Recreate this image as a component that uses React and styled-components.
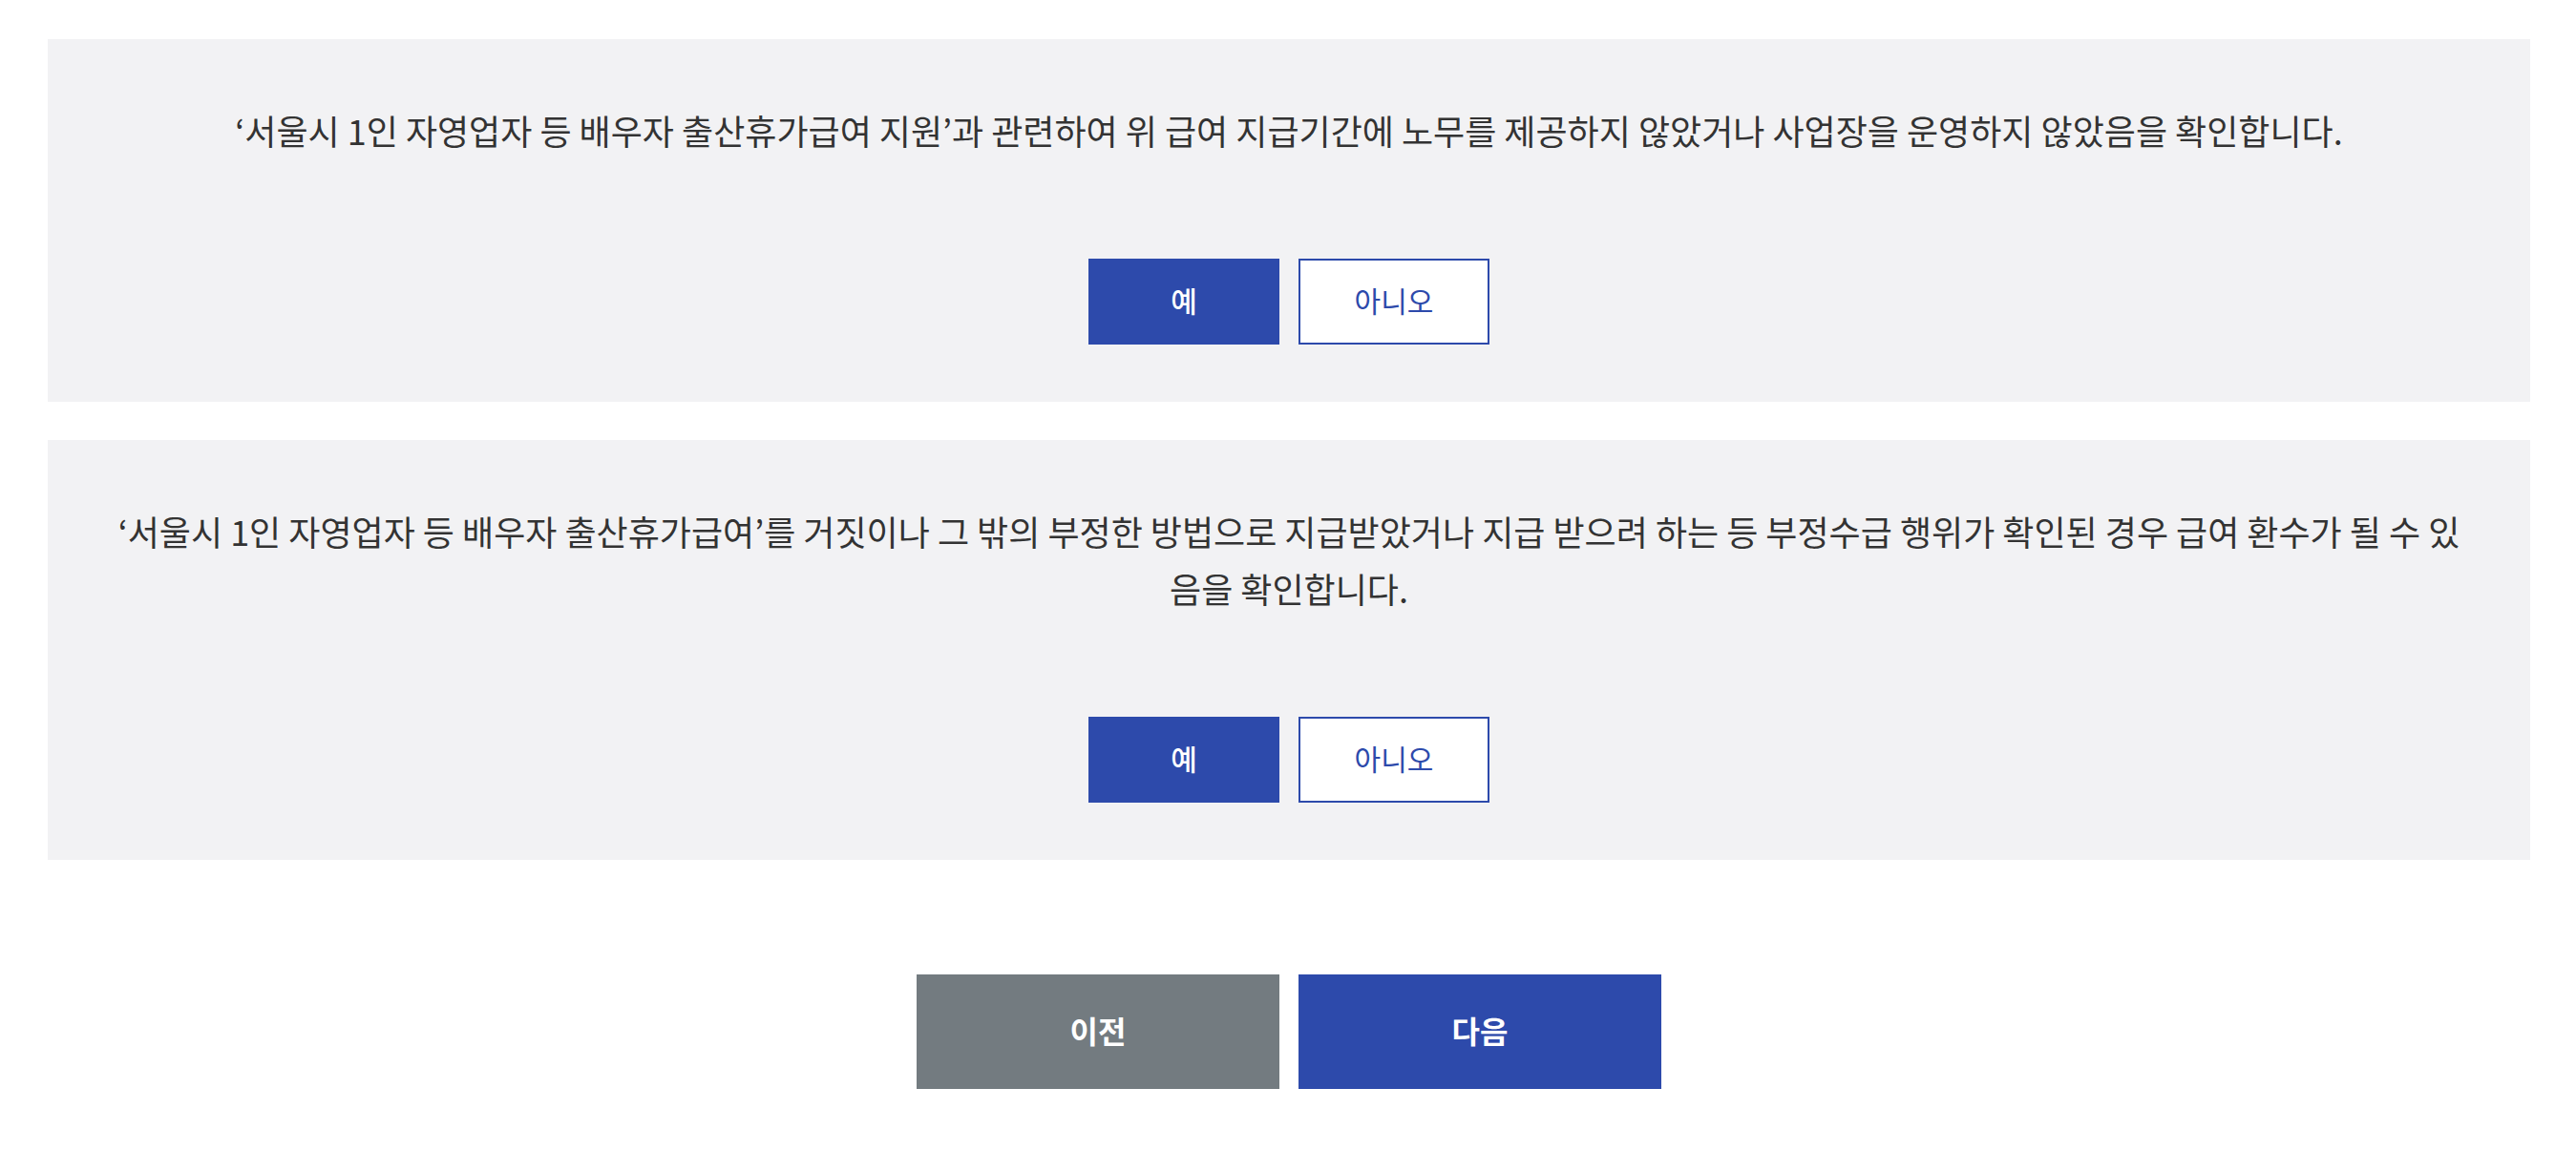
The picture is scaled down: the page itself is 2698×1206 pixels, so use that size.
import styled, { createGlobalStyle } from "styled-components";

const GlobalStyle = createGlobalStyle`
  html, body {
    margin: 0;
    padding: 0;
    background: #ffffff;
  }
  body {
    font-family: "Noto Sans CJK KR", "Noto Sans", sans-serif;
    color: #333333;
  }
  * {
    box-sizing: border-box;
  }
`;

const BLUE = "#2d4aab";
const GRAY = "#737b80";

const questions = [
  {
    id: "q1",
    text: "‘서울시 1인 자영업자 등 배우자 출산휴가급여 지원’과 관련하여 위 급여 지급기간에 노무를 제공하지 않았거나 사업장을 운영하지 않았음을 확인합니다.",
  },
  {
    id: "q2",
    text: "‘서울시 1인 자영업자 등 배우자 출산휴가급여’를 거짓이나 그 밖의 부정한 방법으로 지급받았거나 지급 받으려 하는 등 부정수급 행위가 확인된 경우 급여 환수가 될 수 있음을 확인합니다.",
  },
];

function App() {
  return (
    <>
      <GlobalStyle />
      <Page>
        {questions.map((q) => (
          <QuestionBox key={q.id}>
            <Question>{q.text}</Question>
            <Choices>
              <ChoiceButton type="button" $selected>
                예
              </ChoiceButton>
              <ChoiceButton type="button">아니오</ChoiceButton>
            </Choices>
          </QuestionBox>
        ))}
        <Nav>
          <NavButton type="button" $variant="prev">
            이전
          </NavButton>
          <NavButton type="button">다음</NavButton>
        </Nav>
      </Page>
    </>
  );
}

const Page = styled.main`
  display: flex;
  flex-direction: column;
  gap: 40px;
  padding: 41px 48px 65px 50px;
`;

const QuestionBox = styled.section`
  display: flex;
  flex-direction: column;
  align-items: center;
  gap: 105px;
  padding: 65px 60px 60px;
  background: #f2f2f4;
`;

const Question = styled.p`
  margin: 0;
  font-size: 36px;
  line-height: 60px;
  font-weight: 400;
  color: #333333;
  text-align: center;
`;

const Choices = styled.div`
  display: flex;
  gap: 20px;
`;

const ChoiceButton = styled.button`
  width: 200px;
  height: 90px;
  padding: 0 0 4px;
  border: 2px solid ${BLUE};
  background: ${(p) => (p.$selected ? BLUE : "#ffffff")};
  color: ${(p) => (p.$selected ? "#ffffff" : BLUE)};
  font-family: "Noto Sans CJK KR", "Noto Sans", sans-serif;
  font-size: 30px;
  font-weight: ${(p) => (p.$selected ? 500 : 400)};
  cursor: pointer;
`;

const Nav = styled.div`
  display: flex;
  justify-content: center;
  gap: 20px;
  margin-top: 80px;
`;

const NavButton = styled.button`
  width: 380px;
  height: 120px;
  padding: 0 0 4px;
  border: none;
  background: ${(p) => (p.$variant === "prev" ? GRAY : BLUE)};
  color: #ffffff;
  font-family: "Noto Sans CJK KR", "Noto Sans", sans-serif;
  font-size: 32px;
  font-weight: 700;
  cursor: pointer;
`;

export default App;
